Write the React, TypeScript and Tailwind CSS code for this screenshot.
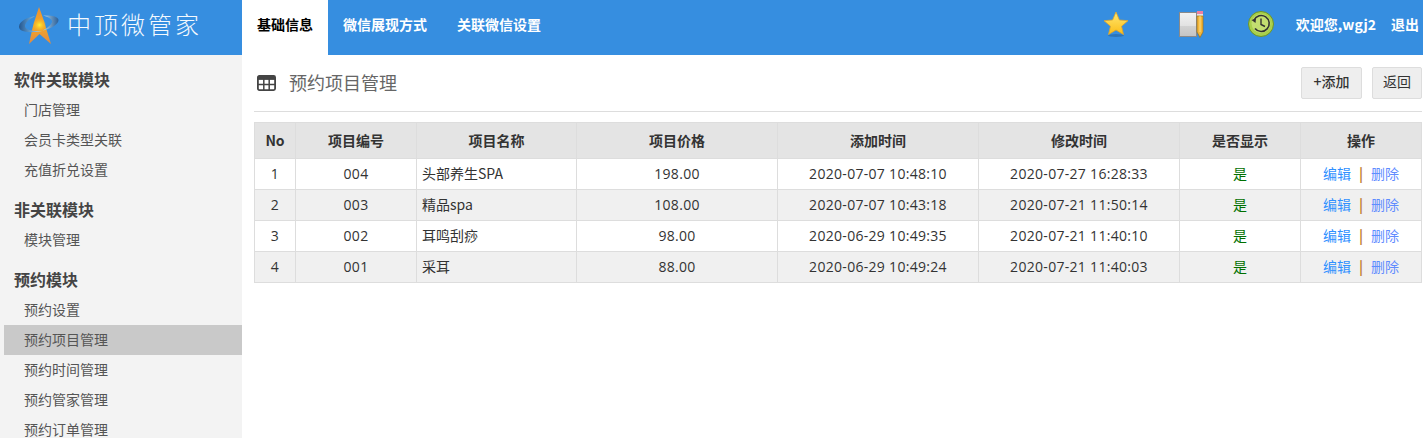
import React from "react";

const font = "[font-family:'Noto_Sans_CJK_SC','Liberation_Sans',sans-serif]";
const numFont = "[font-family:'Open_Sans','Noto_Sans_CJK_SC',sans-serif] tracking-[0.3px]";

const menu = [
  { title: "软件关联模块", items: ["门店管理", "会员卡类型关联", "充值折兑设置"] },
  { title: "非关联模块", items: ["模块管理"] },
  { title: "预约模块", items: ["预约设置", "预约项目管理", "预约时间管理", "预约管家管理", "预约订单管理"] },
];

const rows = [
  { no: 1, code: "004", name: "头部养生SPA", price: "198.00", created: "2020-07-07 10:48:10", updated: "2020-07-27 16:28:33" },
  { no: 2, code: "003", name: "精品spa", price: "108.00", created: "2020-07-07 10:43:18", updated: "2020-07-21 11:50:14" },
  { no: 3, code: "002", name: "耳鸣刮痧", price: "98.00", created: "2020-06-29 10:49:35", updated: "2020-07-21 11:40:10" },
  { no: 4, code: "001", name: "采耳", price: "88.00", created: "2020-06-29 10:49:24", updated: "2020-07-21 11:40:03" },
];

const headers = ["No", "项目编号", "项目名称", "项目价格", "添加时间", "修改时间", "是否显示", "操作"];
const colWidths = ["w-[41px]", "w-[121px]", "w-[160px]", "w-[201px]", "w-[201px]", "w-[201px]", "w-[121px]", "w-[121px]"];

function Logo() {
  return (
    <svg width="49" height="46" viewBox="0 0 49 46" className="shrink-0">
      <defs>
        <linearGradient id="spike" x1="0" y1="0" x2="0" y2="1">
          <stop offset="0" stopColor="#ea8f34" />
          <stop offset="0.5" stopColor="#f4a928" />
          <stop offset="1" stopColor="#e08a42" />
        </linearGradient>
        <radialGradient id="core" cx="0.5" cy="0.5" r="0.5">
          <stop offset="0" stopColor="#fff03a" />
          <stop offset="1" stopColor="#f8b81e" stopOpacity="0" />
        </radialGradient>
        <linearGradient id="ringLeft" x1="0" y1="0" x2="1" y2="0">
          <stop offset="0" stopColor="#24578f" />
          <stop offset="0.5" stopColor="#5f9ccf" />
          <stop offset="1" stopColor="#bcdcf0" />
        </linearGradient>
        <linearGradient id="ringRight" x1="0" y1="0" x2="1" y2="0">
          <stop offset="0" stopColor="#a9d0ea" />
          <stop offset="1" stopColor="#2b5f98" />
        </linearGradient>
      </defs>
      <path d="M21 3 L26 17 L28 24 L33 40 L21.5 30 L11 40 L14.5 24 L16.5 17 Z" fill="url(#spike)" />
      <circle cx="21.5" cy="21" r="7" fill="url(#core)" />
      <path d="M17 12 C9 13.5 1.5 17 1 22.5 C0.7 28 11 29.5 24 27 C14 27.5 6.5 26 7 21.5 C7.5 18 12 15 17 12 Z" fill="url(#ringLeft)" />
      <path d="M25 11.5 C32 11 40.5 12 40.5 16 C40.5 20.5 33 24.5 25 26.5 C30 23.5 34.5 20 34 17 C33.5 15 30 13 25 11.5 Z" fill="url(#ringRight)" />
    </svg>
  );
}

function StarIcon() {
  return (
    <svg width="26" height="26" viewBox="0 0 26 26">
      <defs>
        <linearGradient id="star" x1="0" y1="0" x2="0" y2="1">
          <stop offset="0" stopColor="#ffe873" />
          <stop offset="1" stopColor="#fbbd17" />
        </linearGradient>
      </defs>
      <ellipse cx="13" cy="24.5" rx="8" ry="1.5" fill="#2a6aa8" opacity="0.7" />
      <path d="M13 1 L16.4 9 L25 9.7 L18.5 15.2 L20.5 23.5 L13 19 L5.5 23.5 L7.5 15.2 L1 9.7 L9.6 9 Z" fill="url(#star)" stroke="#e0a52a" strokeWidth="0.8" />
    </svg>
  );
}

function NoteIcon() {
  return (
    <svg width="26" height="28" viewBox="0 0 26 28">
      <defs>
        <linearGradient id="page" x1="0" y1="0" x2="0" y2="1">
          <stop offset="0" stopColor="#f2f2f2" />
          <stop offset="0.55" stopColor="#e2e2e2" />
          <stop offset="0.56" stopColor="#d2d2d2" />
          <stop offset="1" stopColor="#c4c4c4" />
        </linearGradient>
      </defs>
      <rect x="1.5" y="2.5" width="17" height="24" fill="url(#page)" stroke="#8a8a8a" />
      <rect x="19" y="1" width="6" height="3" fill="#ef7fa0" />
      <rect x="19" y="4" width="6" height="2" fill="#e4e4e4" />
      <path d="M19 6 H25 V22 L22 27.5 L19 22 Z" fill="#f3b63a" stroke="#9c7018" strokeWidth="0.7" />
      <path d="M22 6 V22" stroke="#fbe08a" strokeWidth="1" />
    </svg>
  );
}

function ClockIcon() {
  return (
    <svg width="26" height="26" viewBox="0 0 26 26">
      <circle cx="13" cy="13" r="12.5" fill="#a9d04c" stroke="#6d9426" />
      <circle cx="13" cy="12.5" r="9.5" fill="#c3de70" />
      <path d="M7 17.5 A8 8 0 1 0 6 9" fill="none" stroke="#333" strokeWidth="1.6" />
      <path d="M3.5 9 L8 7.5 L7.5 12 Z" fill="#333" />
      <path d="M13 7.5 V13.5 L17 15.5" fill="none" stroke="#333" strokeWidth="1.4" />
    </svg>
  );
}

function TableIcon() {
  return (
    <svg width="19" height="16" viewBox="0 0 19 16">
      <rect x="0.9" y="0.9" width="17.2" height="14.2" rx="1.5" fill="none" stroke="#444" strokeWidth="1.8" />
      <rect x="0.9" y="0.9" width="17.2" height="4" fill="#444" />
      <path d="M6.8 4 V15 M12.2 4 V15 M1 9.5 H18" stroke="#444" strokeWidth="1.5" />
    </svg>
  );
}

export default function App() {
  return (
    <div className={`flex h-screen flex-col overflow-hidden bg-white text-[14px] text-[#333] ${font}`}>
      <header className="flex h-[55px] shrink-0 bg-[#368ee0] text-white">
        <div className="flex w-[242px] shrink-0 items-center pb-[1px] pl-[18px]">
          <Logo />
          <span className="pb-[6px] text-[24px] leading-[32px] font-light tracking-[3px] text-[#f4f9fe]">中顶微管家</span>
        </div>
        <nav className="flex font-bold">
          <a className="flex items-center bg-white px-[15px] pb-[6px] text-black">基础信息</a>
          <a className="flex items-center px-[15px] pb-[6px]">微信展现方式</a>
          <a className="flex items-center px-[15px] pb-[6px]">关联微信设置</a>
        </nav>
        <div className="ml-auto flex items-center pb-[7px] pr-[4px]">
          <StarIcon />
          <div className="ml-[49px]"><NoteIcon /></div>
          <div className="ml-[44px]"><ClockIcon /></div>
          <span className="ml-[22px] font-bold">欢迎您,wgj2</span>
          <span className="ml-[15px] font-bold">退出</span>
        </div>
      </header>

      <div className="flex min-h-0 flex-1">
        <aside className="w-[242px] shrink-0 bg-[#f3f3f3]">
          {menu.map((group) => (
            <div key={group.title}>
              <h3 className="flex h-[40px] items-end pb-[4px] pl-[14px] text-[16px] leading-[24px] font-bold text-[#444]">
                {group.title}
              </h3>
              {group.items.map((item) => (
                <a
                  key={item}
                  className={`ml-[4px] block h-[30px] pl-[20px] leading-[28px] text-[#555] ${
                    item === "预约项目管理" ? "bg-[#c9c9c9]" : ""
                  }`}
                >
                  {item}
                </a>
              ))}
            </div>
          ))}
        </aside>

        <main className="min-w-0 flex-1 pl-[12px] pr-px">
          <div className="flex h-[57px] items-center border-b border-[#ddd] pl-[3px]">
            <TableIcon />
            <h1 className="ml-[13px] pb-[2px] text-[18px] font-normal text-[#666]">预约项目管理</h1>
            <div className="ml-auto flex gap-[10px] pb-[1px]">
              <button className="h-[32px] w-[61px] rounded-[2px] border border-[#ddd] bg-[#eee] pb-[2px] font-medium text-[#333]">+添加</button>
              <button className="h-[32px] w-[50px] rounded-[2px] border border-[#ddd] bg-[#eee] pb-[2px] text-[#333]">返回</button>
            </div>
          </div>

          <table className="mt-[10px] w-[1168px] table-fixed border-collapse">
            <colgroup>
              {colWidths.map((w, i) => (
                <col key={i} className={w} />
              ))}
            </colgroup>
            <thead>
              <tr className="h-[36px] bg-[#e4e4e4]">
                {headers.map((h) => (
                  <th key={h} className="border border-[#ddd] font-bold text-[#333]">{h}</th>
                ))}
              </tr>
            </thead>
            <tbody>
              {rows.map((r, i) => (
                <tr key={r.no} className={`h-[31px] ${i % 2 === 1 ? "bg-[#f0f0f0]" : "bg-white"}`}>
                  <td className={`border border-[#ddd] pb-[1px] text-center ${numFont}`}>{r.no}</td>
                  <td className={`border border-[#ddd] pb-[1px] text-center ${numFont}`}>{r.code}</td>
                  <td className="border border-[#ddd] pb-[2px] pl-[5px]">{r.name}</td>
                  <td className={`border border-[#ddd] pb-[1px] text-center ${numFont}`}>{r.price}</td>
                  <td className={`border border-[#ddd] pb-[1px] text-center ${numFont}`}>{r.created}</td>
                  <td className={`border border-[#ddd] pb-[1px] text-center ${numFont}`}>{r.updated}</td>
                  <td className="border border-[#ddd] pb-[2px] text-center text-[#007000]">是</td>
                  <td className="border border-[#ddd] pb-[2px] text-center">
                    <a className="text-[#3090ff]">编辑</a>
                    <span className="mx-[8px] font-bold text-[#c08030]">|</span>
                    <a className="text-[#5f8cff]">删除</a>
                  </td>
                </tr>
              ))}
            </tbody>
          </table>
        </main>
      </div>
    </div>
  );
}
